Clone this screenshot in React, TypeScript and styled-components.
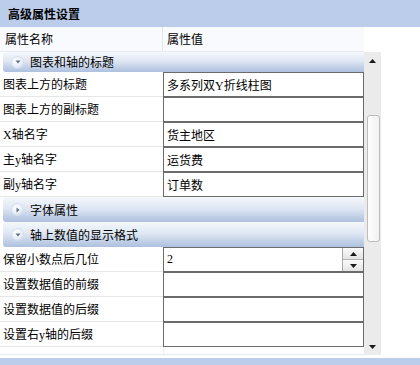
import React from "react";
import styled, { createGlobalStyle } from "styled-components";

const GlobalStyle = createGlobalStyle`
  html, body {
    margin: 0;
    padding: 0;
    background: #ffffff;
  }
  body {
    width: 420px;
    height: 365px;
    overflow: hidden;
    font-family: "Liberation Serif", "Noto Sans CJK SC", serif;
    font-size: 12px;
    color: #000000;
  }
`;

const Panel = styled.div`
  display: flex;
  flex-direction: column;
  width: 420px;
  height: 365px;
`;

const TitleBar = styled.div`
  display: flex;
  align-items: center;
  height: 27px;
  padding-left: 8px;
  background: #bccdeb;
  font-family: "Noto Sans CJK SC", sans-serif;
  font-weight: 700;
  font-size: 12px;
`;

const Body = styled.div`
  display: flex;
  height: 328px;
`;

const Grid = styled.div`
  display: flex;
  flex-direction: column;
  width: 364px;
`;

const HeaderRow = styled.div`
  display: grid;
  grid-template-columns: 162px 1fr;
  height: 25px;
  background: #f8fafd;
  border-bottom: 1px solid #e6ebf2;
  box-sizing: border-box;
`;

const HeaderCell = styled.div<{ $divider?: boolean }>`
  display: flex;
  align-items: center;
  padding-left: ${(p) => (p.$divider ? "4px" : "5px")};
  border-left: ${(p) => (p.$divider ? "1px solid #e2e6ec" : "none")};
`;

const Rows = styled.div`
  display: flex;
  flex-direction: column;
  height: 303px;
  overflow: hidden;
  border-bottom: 1px solid #e4e8ee;
  box-sizing: border-box;
`;

const GroupRow = styled.div<{ $h: number }>`
  display: flex;
  align-items: center;
  gap: 7px;
  height: ${(p) => p.$h}px;
  flex-shrink: 0;
  margin-left: 3px;
  padding-left: 9px;
  border-radius: 3px 0 0 3px;
  background: linear-gradient(#f5f8fc 0%, #dfe7f3 45%, #adc0de 100%);
  box-sizing: border-box;
`;

const Toggle = styled.span`
  display: flex;
  align-items: center;
  justify-content: center;
  width: 11px;
  height: 11px;
  border-radius: 50%;
  background: radial-gradient(circle at 40% 35%, #ffffff 0%, #e9eef7 55%, #c3d0e4 100%);
  box-shadow: 0 0 0 1px #d5deec;
`;

const DataRow = styled.div`
  display: grid;
  grid-template-columns: 163px 1fr;
  height: 25px;
  flex-shrink: 0;
`;

const Label = styled.div`
  display: flex;
  align-items: center;
  padding-left: 3px;
  border-bottom: 1px solid #e6e6e6;
  box-sizing: border-box;
  white-space: nowrap;
`;

const ValueBox = styled.div`
  display: flex;
  align-items: stretch;
  height: 25px;
  border: 1px solid #6b6b6b;
  background: #ffffff;
  box-sizing: border-box;
`;

const ValueText = styled.div`
  display: flex;
  flex: 1;
  align-items: center;
  padding-left: 3px;
  white-space: nowrap;
`;

const Spinner = styled.div`
  display: flex;
  flex-direction: column;
  width: 20px;
  border-left: 1px solid #a8a8a8;
`;

const SpinButton = styled.div`
  display: flex;
  flex: 1;
  align-items: center;
  justify-content: center;
  background: linear-gradient(#fbfbfb, #e4e4e4);
  & + & {
    border-top: 1px solid #b4b4b4;
  }
`;

const Blank = styled.div`
  display: grid;
  grid-template-columns: 163px 1fr;
  height: 10px;
  flex-shrink: 0;
  & > div + div {
    border-left: 1px solid #ececec;
  }
`;

const Side = styled.div`
  display: flex;
  flex-direction: column;
  width: 17px;
  padding-top: 25px;
  box-sizing: border-box;
`;

const ScrollBar = styled.div`
  display: flex;
  flex-direction: column;
  height: 303px;
  background: #ebebeb;
`;

const ArrowButton = styled.div`
  display: flex;
  align-items: center;
  justify-content: center;
  height: 17px;
`;

const Track = styled.div`
  flex: 1;
  padding: 46px 1px 0 3px;
`;

const Thumb = styled.div`
  height: 127px;
  border: 1px solid #bdbdbd;
  border-radius: 3px;
  background: linear-gradient(90deg, #fdfdfd, #f1f1f1);
  box-sizing: border-box;
`;

const FooterGap = styled.div`
  height: 3px;
`;

const FooterBar = styled.div`
  flex: 1;
  background: #bccdeb;
`;

const Tri = ({ dir, color = "#1a1a1a" }: { dir: "up" | "down" | "right"; color?: string }) => {
  const points =
    dir === "up" ? "0,4 7,4 3.5,0" : dir === "down" ? "0,0 7,0 3.5,4" : "0,0 4,3.5 0,7";
  const w = dir === "right" ? 4 : 7;
  const h = dir === "right" ? 7 : 4;
  return (
    <svg width={w} height={h} viewBox={`0 0 ${w} ${h}`}>
      <polygon points={points} fill={color} />
    </svg>
  );
};

const SmallTri = ({ dir }: { dir: "down" | "right" }) => (
  <svg width="6" height="6" viewBox="0 0 6 6">
    <polygon points={dir === "down" ? "0.5,1.5 5.5,1.5 3,4.5" : "1.5,0.5 4.5,3 1.5,5.5"} fill="#5f6f88" />
  </svg>
);

type Item =
  | { kind: "group"; title: string; open: boolean; h: number }
  | { kind: "row"; label: string; value: string; spin?: boolean };

const items: Item[] = [
  { kind: "group", title: "图表和轴的标题", open: true, h: 20 },
  { kind: "row", label: "图表上方的标题", value: "多系列双Y折线柱图" },
  { kind: "row", label: "图表上方的副标题", value: "" },
  { kind: "row", label: "X轴名字", value: "货主地区" },
  { kind: "row", label: "主y轴名字", value: "运货费" },
  { kind: "row", label: "副y轴名字", value: "订单数" },
  { kind: "group", title: "字体属性", open: false, h: 25 },
  { kind: "group", title: "轴上数值的显示格式", open: true, h: 25 },
  { kind: "row", label: "保留小数点后几位", value: "2", spin: true },
  { kind: "row", label: "设置数据值的前缀", value: "" },
  { kind: "row", label: "设置数据值的后缀", value: "" },
  { kind: "row", label: "设置右y轴的后缀", value: "" },
];

export default function App() {
  return (
    <>
      <GlobalStyle />
      <Panel>
        <TitleBar>高级属性设置</TitleBar>
        <Body>
          <Grid>
            <HeaderRow>
              <HeaderCell>属性名称</HeaderCell>
              <HeaderCell $divider>属性值</HeaderCell>
            </HeaderRow>
            <Rows>
              {items.map((it, i) =>
                it.kind === "group" ? (
                  <GroupRow key={i} $h={it.h}>
                    <Toggle>
                      <SmallTri dir={it.open ? "down" : "right"} />
                    </Toggle>
                    {it.title}
                  </GroupRow>
                ) : (
                  <DataRow key={i}>
                    <Label>{it.label}</Label>
                    <ValueBox>
                      <ValueText>{it.value}</ValueText>
                      {it.spin && (
                        <Spinner>
                          <SpinButton>
                            <Tri dir="up" />
                          </SpinButton>
                          <SpinButton>
                            <Tri dir="down" />
                          </SpinButton>
                        </Spinner>
                      )}
                    </ValueBox>
                  </DataRow>
                )
              )}
              <Blank>
                <div />
                <div />
              </Blank>
            </Rows>
          </Grid>
          <Side>
            <ScrollBar>
              <ArrowButton>
                <Tri dir="up" />
              </ArrowButton>
              <Track>
                <Thumb />
              </Track>
              <ArrowButton>
                <Tri dir="down" />
              </ArrowButton>
            </ScrollBar>
          </Side>
        </Body>
        <FooterGap />
        <FooterBar />
      </Panel>
    </>
  );
}
